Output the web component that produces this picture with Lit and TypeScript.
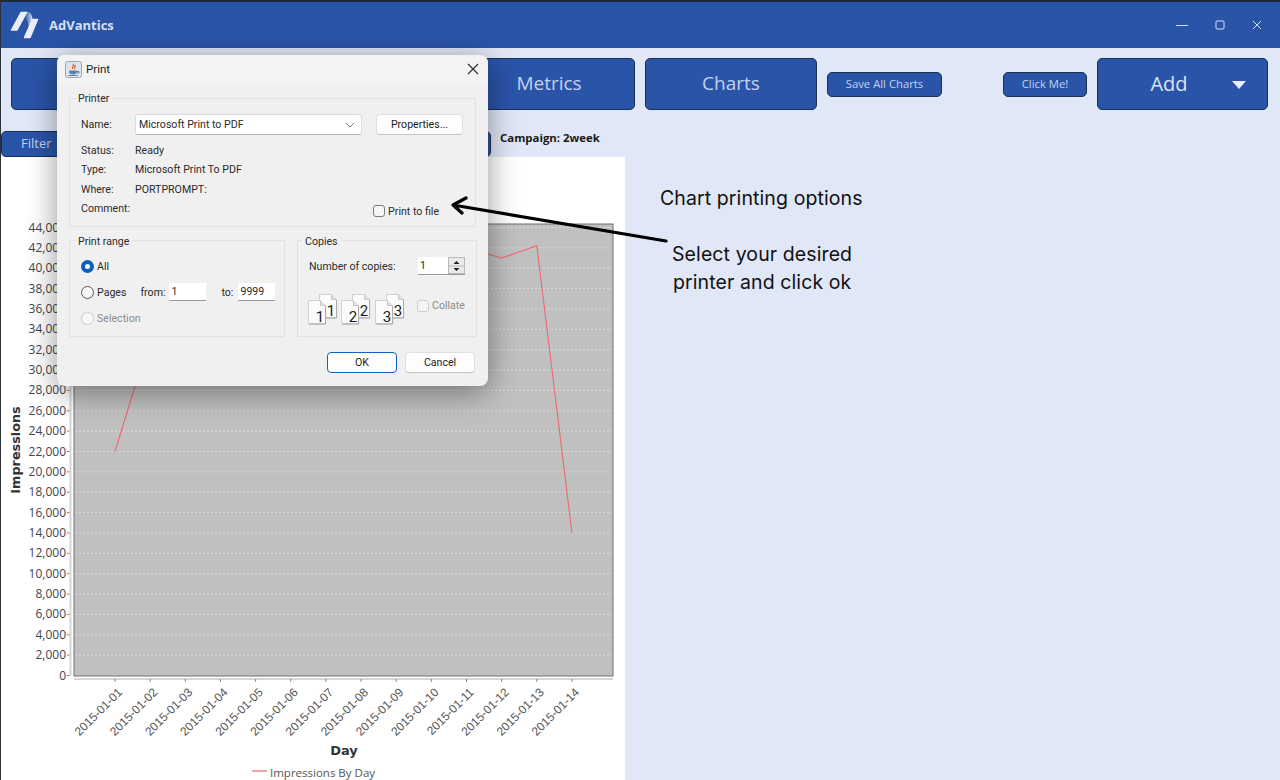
import { LitElement, css, html, svg } from 'lit';
import { customElement } from 'lit/decorators.js';

const Y_TICKS = Array.from({ length: 23 }, (_, i) => i * 2000);
const DAYS = Array.from({ length: 14 }, (_, i) => `2015-01-${String(i + 1).padStart(2, '0')}`);
const SERIES = [22000, 33200, 39000, 41000, 40000, 42000, 41500, 43000, 42500, 41000, 42000, 41000, 42200, 14000];

const yOf = (v: number) => 675.5 - (v / 44000) * 448;
const xOf = (i: number) => 115 + i * 35.15;

@customElement('print-dialog')
export class PrintDialog extends LitElement {
  static styles = css`
    :host {
      position: absolute;
      left: 57px;
      top: 55px;
      width: 431px;
      height: 331px;
      box-sizing: border-box;
      background: #f0f0f0;
      border-radius: 8px;
      box-shadow: 0 6px 30px rgba(0, 0, 0, 0.42);
      font: 10.6px 'Roboto', sans-serif;
      color: #2b2b2b;
      display: flex;
      flex-direction: column;
    }
    .head {
      height: 30px;
      box-sizing: border-box;
      display: flex;
      align-items: center;
      padding: 0 9px 2px 8px;
      gap: 4px;
      background: #f3f3f3;
      border-radius: 8px 8px 0 0;
      font-size: 11.5px;
      color: #1c1c1c;
    }
    .head .close {
      margin-left: auto;
    }
    .body {
      padding: 13px 12px 0 12px;
      display: flex;
      flex-direction: column;
    }
    .group {
      position: relative;
      box-sizing: border-box;
      border: 1px solid #e2e2e2;
    }
    .legend {
      position: absolute;
      left: 5px;
      top: -7px;
      padding: 0 3px;
      background: #f0f0f0;
      line-height: 13px;
    }
    .printer {
      height: 129px;
      padding: 15px 0 0 11px;
      display: grid;
      grid-template-columns: 54px 227px 101px;
      grid-template-rows: 27px 19px 19px 20px 19px;
      align-items: center;
    }
    .printer .top {
      align-self: start;
      line-height: 21px;
    }
    .printer .span-gap {
      margin-left: 14px;
    }
    .combo {
      height: 21px;
      box-sizing: border-box;
      background: #fff;
      border: 1px solid #dcdcdc;
      border-bottom-color: #b5b5b5;
      border-radius: 3px;
      display: flex;
      align-items: center;
      justify-content: space-between;
      padding: 0 6px 0 3px;
    }
    .btn {
      height: 21px;
      box-sizing: border-box;
      background: #fdfdfd;
      border: 1px solid #dfdfdf;
      border-bottom-color: #c4c4c4;
      border-radius: 4px;
      display: flex;
      align-items: center;
      justify-content: center;
      color: #1c1c1c;
    }
    .tofile {
      grid-column: 2 / 4;
      justify-self: end;
      display: flex;
      align-items: center;
      gap: 3px;
      margin: 5px 24px 0 0;
    }
    .box {
      width: 12px;
      height: 12px;
      box-sizing: border-box;
      background: #f5f5f5;
      border: 1px solid #7c7c7c;
      border-radius: 3px;
    }
    .box.off {
      border-color: #cfcfcf;
    }
    .lower {
      display: grid;
      grid-template-columns: 216px 180px;
      column-gap: 12px;
      margin-top: 13px;
    }
    .lower .group {
      height: 97px;
    }
    .lower .legend {
      top: -6px;
    }
    .range {
      display: flex;
      flex-direction: column;
      padding: 18px 0 0 11px;
    }
    .range .row {
      display: flex;
      align-items: center;
      height: 14px;
      gap: 3px;
    }
    .range .row + .row {
      margin-top: 12px;
    }
    .radio {
      width: 13px;
      height: 13px;
      box-sizing: border-box;
      border: 1px solid #5a5a5a;
      border-radius: 50%;
      background: #f8f8f8;
    }
    .radio.on {
      border: 4px solid #0b5fb8;
      background: #fff;
    }
    .radio.off {
      border-color: #c8c8c8;
    }
    .muted {
      color: #8c8c8c;
    }
    .from {
      margin-left: 11px;
      width: 29px;
    }
    .to {
      margin-left: 12px;
      width: 17px;
    }
    .field {
      width: 37px;
      height: 18px;
      box-sizing: border-box;
      background: #fff;
      border-bottom: 1px solid #9a9a9a;
      display: flex;
      align-items: center;
      padding-left: 2px;
      flex: none;
    }
    .range .gap {
      margin-left: -3px;
    }
    .copies {
      padding: 16px 11px 0 11px;
      display: flex;
      flex-direction: column;
    }
    .copies .legend {
      left: 4px;
    }
    .copies .row {
      display: flex;
      align-items: center;
      justify-content: space-between;
    }
    .spin {
      width: 47px;
      height: 18px;
      box-sizing: border-box;
      display: flex;
      background: #fff;
      border-bottom: 1px solid #9a9a9a;
    }
    .spin .val {
      flex: 1;
      padding-left: 2px;
      line-height: 17px;
    }
    .spin .arrows {
      width: 17px;
      box-sizing: border-box;
      background: #e9e9e9;
      border: 1px solid #b9b9b9;
      display: flex;
    }
    .pages {
      margin: 19px 0 0 -1px;
      display: flex;
      align-items: flex-start;
    }
    .collate {
      display: flex;
      align-items: center;
      gap: 3px;
      margin: 5px 0 0 12px;
    }
    .actions {
      display: flex;
      justify-content: flex-end;
      gap: 8px;
      margin-top: 15px;
      padding-right: 1px;
    }
    .actions .btn {
      width: 70px;
    }
    .actions .ok {
      border: 1px solid #0b64c0;
      border-radius: 4px;
    }
  `;

  private sheet(x: number, y: number, n: string) {
    return svg`<path d="M${x} ${y}h12l5 5v18h-17z" fill="#fbfbfb" stroke="#c8c8c8" stroke-width="0.8"/>
      <path d="M${x + 12} ${y}v5h5" fill="#e4e4e4" stroke="#bdbdbd" stroke-width="0.8"/>
      <path d="M${x + 0.5} ${y + 23.6}h16.600v-18" fill="none" stroke="#a8a8a8" stroke-width="1"/>
      <text x="${x + 11.5}" y="${y + 21}" font-family="Roboto, sans-serif" font-size="15" fill="#1c1c1c" text-anchor="middle">${n}</text>`;
  }

  render() {
    return html`
      <div class="head">
        <svg width="17" height="17" viewBox="0 0 17 17">
          <rect x="0.5" y="0.5" width="16" height="16" rx="2" fill="#dfe4ea" stroke="#9aa6b4" />
          <path d="M8 3c2 2-2 3 0 5M10 4c1 1.500-1.500 2 0 4" fill="none" stroke="#d9572a" stroke-width="1.200" />
          <path d="M4 9.500h8c0 3-1.500 4-4 4s-4-1-4-4z" fill="#5c7fa6" />
          <path d="M12 10.500h2v1.500h-2M3.500 14.500h9" fill="none" stroke="#5c7fa6" />
        </svg>
        <span>Print</span>
        <svg class="close" width="12" height="12" viewBox="0 0 12 12">
          <path d="M1 1l10 10M11 1L1 11" stroke="#2b2b2b" stroke-width="1.100" fill="none" />
        </svg>
      </div>
      <div class="body">
        <div class="group printer">
          <span class="legend">Printer</span>
          <span class="top">Name:</span>
          <div class="combo top">
            <span>Microsoft Print to PDF</span>
            <svg width="10" height="6" viewBox="0 0 10 6"><path d="M1 1l4 4 4-4" fill="none" stroke="#777" /></svg>
          </div>
          <div class="btn span-gap top">Properties...</div>
          <span>Status:</span><span>Ready</span><span></span>
          <span>Type:</span><span>Microsoft Print To PDF</span><span></span>
          <span>Where:</span><span>PORTPROMPT:</span><span></span>
          <span>Comment:</span>
          <div class="tofile"><span class="box"></span><span>Print to file</span></div>
        </div>
        <div class="lower">
          <div class="group range">
            <span class="legend">Print range</span>
            <div class="row"><span class="radio on"></span><span>All</span></div>
            <div class="row">
              <span class="radio"></span><span>Pages</span>
              <span class="from">from:</span><span class="field gap">1</span>
              <span class="to">to:</span><span class="field gap">9999</span>
            </div>
            <div class="row muted"><span class="radio off"></span><span>Selection</span></div>
          </div>
          <div class="group copies">
            <span class="legend">Copies</span>
            <div class="row">
              <span>Number of copies:</span>
              <div class="spin">
                <span class="val">1</span>
                <span class="arrows">
                  <svg width="15" height="16" viewBox="0 0 15 16">
                    <path d="M7.500 3l3 3h-6zM7.500 13l3-3h-6z" fill="#1c1c1c" />
                    <path d="M0 8h15" stroke="#b9b9b9" />
                  </svg>
                </span>
              </div>
            </div>
            <div class="pages">
              <svg width="97" height="31" viewBox="0 0 97 31">
                ${this.sheet(11.5, 0.5, '1')}${this.sheet(0.5, 6.5, '1')}
                ${this.sheet(44.5, 0.5, '2')}${this.sheet(33.5, 6.5, '2')}
                ${this.sheet(78.5, 0.5, '3')}${this.sheet(67.5, 6.5, '3')}
              </svg>
              <div class="collate"><span class="box off"></span><span class="muted">Collate</span></div>
            </div>
          </div>
        </div>
        <div class="actions">
          <div class="btn ok">OK</div>
          <div class="btn">Cancel</div>
        </div>
      </div>
    `;
  }
}

@customElement('app-root')
export class AppRoot extends LitElement {
  static styles = css`
    :host {
      display: block;
      position: relative;
      width: 1280px;
      height: 780px;
      overflow: hidden;
      background: #e0e7f6;
      font-family: 'Open Sans', sans-serif;
    }
    .titlebar {
      height: 48px;
      box-sizing: border-box;
      background: #2a54a8;
      border-top: 2px solid #1f2a3c;
      display: flex;
      align-items: center;
      padding: 0 18px 0 9px;
      color: #dfe7f7;
    }
    .brand {
      margin-left: 10px;
      font-weight: 700;
      font-size: 13px;
      color: #d5e0f5;
    }
    .winctl {
      margin-left: auto;
      display: flex;
      align-items: center;
      gap: 27px;
    }
    .toolbar {
      display: flex;
      align-items: flex-start;
      gap: 10px;
      padding: 10px 12px 0 11px;
      height: 62px;
      box-sizing: border-box;
    }
    .tbtn {
      box-sizing: border-box;
      background: #2a54a8;
      border: 1px solid #1d2f52;
      border-radius: 5px;
      color: #c3d2ef;
      display: flex;
      align-items: center;
      justify-content: center;
    }
    .big {
      width: 172px;
      height: 52px;
      font-size: 19px;
      padding-bottom: 2px;
    }
    .first {
      width: 442px;
    }
    .small {
      height: 25px;
      font-size: 11.3px;
      margin-top: 14px;
      padding-bottom: 2px;
    }
    .save {
      width: 115px;
    }
    .click {
      width: 84px;
      margin-left: 51px;
    }
    .add {
      width: 171px;
      height: 52px;
      font-size: 20px;
      position: relative;
      padding: 0 27px 2px 0;
      color: #dbe4f6;
    }
    .caret {
      position: absolute;
      right: 21px;
      top: 22px;
    }
    .filters {
      display: flex;
      align-items: center;
      height: 47px;
      padding: 21px 0 0 1px;
      box-sizing: border-box;
    }
    .filter {
      width: 490px;
      height: 26px;
      border-radius: 5px;
      font-size: 13px;
      justify-content: flex-start;
      padding: 0 0 2px 19px;
    }
    .campaign {
      margin: 0 0 13px 9px;
      font-size: 11.4px;
      font-weight: 700;
      color: #1a1a1a;
    }
    .panel {
      width: 625px;
      height: 623px;
      background: #fff;
    }
    .panel svg {
      display: block;
    }
    .edge {
      position: absolute;
      left: 0;
      top: 0;
      bottom: 0;
      width: 1px;
      background: #2b3036;
    }
    .note {
      position: absolute;
      font: 19.5px/28px 'Inter', sans-serif;
      letter-spacing: 0.1px;
      color: #111;
      white-space: nowrap;
    }
    .arrow {
      position: absolute;
      left: 440px;
      top: 190px;
      pointer-events: none;
    }
  `;

  private chart() {
    const oy = 157;
    const points = SERIES.map((v, i) => `${xOf(i)},${yOf(v) - oy}`).join(' ');
    return html`<svg width="625" height="623" viewBox="0 0 625 623">
      <rect x="74" y="${224 - oy}" width="539" height="${452}" fill="#c0c0c0" stroke="#6f6f6f" />
      ${Y_TICKS.map(
        (v) => svg`
          ${v > 0
            ? svg`<line x1="75" x2="612" y1="${yOf(v) - oy}" y2="${yOf(v) - oy}" stroke="#dadada" stroke-dasharray="2 2" />`
            : ''}
          <line x1="67" x2="70" y1="${yOf(v) - oy}" y2="${yOf(v) - oy}" stroke="#888" />
          <text x="66" y="${yOf(v) - oy + 4}" text-anchor="end" font-family="Open Sans, sans-serif" font-size="12" fill="#3f4450">${v.toLocaleString('en-US')}</text>
        `,
      )}
      <line x1="70.500" x2="70.500" y1="${224 - oy}" y2="${676 - oy}" stroke="#d6d6d6" stroke-width="2" />
      <line x1="74" x2="613" y1="${679 - oy}" y2="${679 - oy}" stroke="#d6d6d6" stroke-width="2" />
      ${DAYS.map(
        (d, i) => svg`
          <line x1="${xOf(i)}" x2="${xOf(i)}" y1="${679 - oy}" y2="${682 - oy}" stroke="#888" />
          <text transform="translate(${xOf(i) + 8} ${693 - oy}) rotate(-45)" text-anchor="end" font-family="Liberation Sans, sans-serif" font-size="12" fill="#555">${d}</text>
        `,
      )}
      <polyline points="${points}" fill="none" stroke="#f0686c" stroke-width="1.100" />
      <text transform="translate(20 ${450 - oy}) rotate(-90)" text-anchor="middle" font-family="DejaVu Sans, sans-serif" font-weight="700" font-size="12.800" fill="#333">Impressions</text>
      <text x="344" y="${755 - oy}" text-anchor="middle" font-family="DejaVu Sans, sans-serif" font-weight="700" font-size="13" fill="#333">Day</text>
      <line x1="252" x2="267" y1="${771 - oy}" y2="${771 - oy}" stroke="#f7a3a6" stroke-width="2" />
      <text x="270" y="${777 - oy}" font-family="Open Sans, sans-serif" font-size="11.500" fill="#555">Impressions By Day</text>
    </svg>`;
  }

  render() {
    return html`
      <div class="titlebar">
        <svg width="30" height="30" viewBox="0 0 30 30">
          <defs>
            <linearGradient id="lg" x1="0" y1="0" x2="1" y2="0">
              <stop offset="0" stop-color="#2f58aa" />
              <stop offset="0.600" stop-color="#8ea6d6" />
              <stop offset="1" stop-color="#dfe6f5" />
            </linearGradient>
          </defs>
          <path d="M17 1.500c3 0 5 1.500 6 5 1 4 0 8-3 14-.5-5-1-10-4-13z" fill="url(#lg)" />
          <path d="M12 2.500h5.500L8 20H2.500z" fill="#e9eef9" stroke="#e9eef9" stroke-width="1.500" stroke-linejoin="round" />
          <path d="M23.500 9.500h5L21 27.500h-5.500z" fill="#e9eef9" stroke="#e9eef9" stroke-width="1.500" stroke-linejoin="round" />
        </svg>
        <span class="brand">AdVantics</span>
        <div class="winctl">
          <svg width="12" height="12" viewBox="0 0 12 12"><path d="M0 6.500h12" stroke="#d5e0f5" /></svg>
          <svg width="10" height="10" viewBox="0 0 10 10"><rect x="1" y="1" width="8" height="8" rx="1" fill="none" stroke="#d5e0f5" /></svg>
          <svg width="10" height="10" viewBox="0 0 10 10"><path d="M1 1l8 8M9 1L1 9" stroke="#d5e0f5" /></svg>
        </div>
      </div>
      <div class="toolbar">
        <div class="tbtn big first"></div>
        <div class="tbtn big">Metrics</div>
        <div class="tbtn big">Charts</div>
        <div class="tbtn small save">Save All Charts</div>
        <div class="tbtn small click">Click Me!</div>
        <div class="tbtn add">
          Add
          <svg class="caret" width="14" height="8" viewBox="0 0 14 8"><path d="M0 0h14l-7 8z" fill="#e8eefa" /></svg>
        </div>
      </div>
      <div class="filters">
        <div class="tbtn filter">Filter</div>
        <span class="campaign">Campaign: 2week</span>
      </div>
      <div class="panel">${this.chart()}</div>
      <div class="edge"></div>
      <print-dialog></print-dialog>
      <span class="note" style="left:660px;top:184px">Chart printing options</span>
      <span class="note" style="left:672px;top:240px">Select your desired</span>
      <span class="note" style="left:673px;top:268px">printer and click ok</span>
      <svg class="arrow" width="240" height="70" viewBox="0 0 240 70">
        <path d="M226 51L13 15M26 8L13 15l9 8" fill="none" stroke="#000" stroke-width="3.200" stroke-linecap="round" stroke-linejoin="round" />
      </svg>
    `;
  }
}
